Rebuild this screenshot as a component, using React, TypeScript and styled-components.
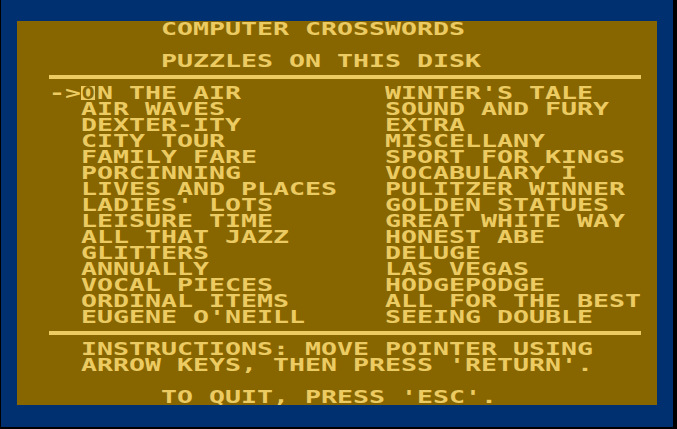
import React from 'react';
import styled, { createGlobalStyle } from 'styled-components';

const GlobalStyle = createGlobalStyle`
  html, body {
    margin: 0;
    padding: 0;
    background: #000;
  }
`;

const ink = '#eccb63';
const brown = '#876600';

const Screen = styled.div`
  width: 677px;
  height: 429px;
  background: #000;
  padding-left: 1px;
  box-sizing: border-box;
`;

const Frame = styled.div`
  width: 672px;
  height: 427px;
  box-sizing: border-box;
  padding: 21px 16px 22px 16px;
  background: #00306f;
`;

const Panel = styled.div`
  width: 640px;
  height: 384px;
  background: ${brown};
  color: ${ink};
  display: flex;
  flex-direction: column;
  font-family: 'DejaVu Sans Mono', 'Liberation Mono', monospace;
  font-weight: bold;
  font-size: 17px;
  line-height: 16px;
  overflow: hidden;
`;

// one text row of the 40 column screen, indent is counted in character cells
const Row = styled.div<{ $indent?: number }>`
  height: 16px;
  padding-left: ${(p) => (p.$indent || 0) * 16}px;
  white-space: pre;
`;

// glyphs are stretched so every character takes a 16px cell
const Glyphs = styled.span`
  display: inline-block;
  white-space: pre;
  transform: scaleX(1.5635);
  transform-origin: 0 50%;
`;

const Rule = styled.hr`
  border: 0;
  height: 4px;
  margin: 6px 16px 6px 32px;
  background: ${ink};
  flex: none;
`;

const Listing = styled.div`
  display: grid;
  grid-template-columns: 32px 304px 1fr;
  grid-auto-rows: 16px;
  padding-left: 32px;
`;

const Cell = styled.div`
  display: flex;
  align-items: flex-start;
  white-space: pre;
`;

const Cursor = styled.span`
  display: inline-flex;
  align-items: center;
  justify-content: center;
  flex: none;
  width: 14px;
  height: 14px;
  margin: 1px 2px 0 0;
  background: ${ink};
  color: ${brown};
  line-height: 14px;

  span {
    display: inline-block;
    transform: scaleX(1.25);
  }
`;

const left = [
  'ON THE AIR',
  'AIR WAVES',
  'DEXTER-ITY',
  'CITY TOUR',
  'FAMILY FARE',
  'PORCINNING',
  'LIVES AND PLACES',
  "LADIES' LOTS",
  'LEISURE TIME',
  'ALL THAT JAZZ',
  'GLITTERS',
  'ANNUALLY',
  'VOCAL PIECES',
  'ORDINAL ITEMS',
  "EUGENE O'NEILL",
];

const right = [
  "WINTER'S TALE",
  'SOUND AND FURY',
  'EXTRA',
  'MISCELLANY',
  'SPORT FOR KINGS',
  'VOCABULARY I',
  'PULITZER WINNER',
  'GOLDEN STATUES',
  'GREAT WHITE WAY',
  'HONEST ABE',
  'DELUGE',
  'LAS VEGAS',
  'HODGEPODGE',
  'ALL FOR THE BEST',
  'SEEING DOUBLE',
];

const App = () => {
  const selected = 0;

  return (
    <>
      <GlobalStyle />
      <Screen>
        <Frame>
          <Panel>
            <Row $indent={9}><Glyphs>COMPUTER CROSSWORDS</Glyphs></Row>
            <Row />
            <Row $indent={9}><Glyphs>PUZZLES ON THIS DISK</Glyphs></Row>
            <Rule />
            <Listing>
              {left.map((title, i) => (
                <React.Fragment key={title}>
                  <Cell>{i === selected && <Glyphs>-&gt;</Glyphs>}</Cell>
                  <Cell>
                    {i === selected ? (
                      <>
                        <Cursor><span>{title[0]}</span></Cursor>
                        <Glyphs>{title.slice(1)}</Glyphs>
                      </>
                    ) : (
                      <Glyphs>{title}</Glyphs>
                    )}
                  </Cell>
                  <Cell><Glyphs>{right[i]}</Glyphs></Cell>
                </React.Fragment>
              ))}
            </Listing>
            <Rule />
            <Row $indent={4}><Glyphs>INSTRUCTIONS: MOVE POINTER USING</Glyphs></Row>
            <Row $indent={4}><Glyphs>ARROW KEYS, THEN PRESS 'RETURN'.</Glyphs></Row>
            <Row />
            <Row $indent={9}><Glyphs>TO QUIT, PRESS 'ESC'.</Glyphs></Row>
          </Panel>
        </Frame>
      </Screen>
    </>
  );
};

export default App;
